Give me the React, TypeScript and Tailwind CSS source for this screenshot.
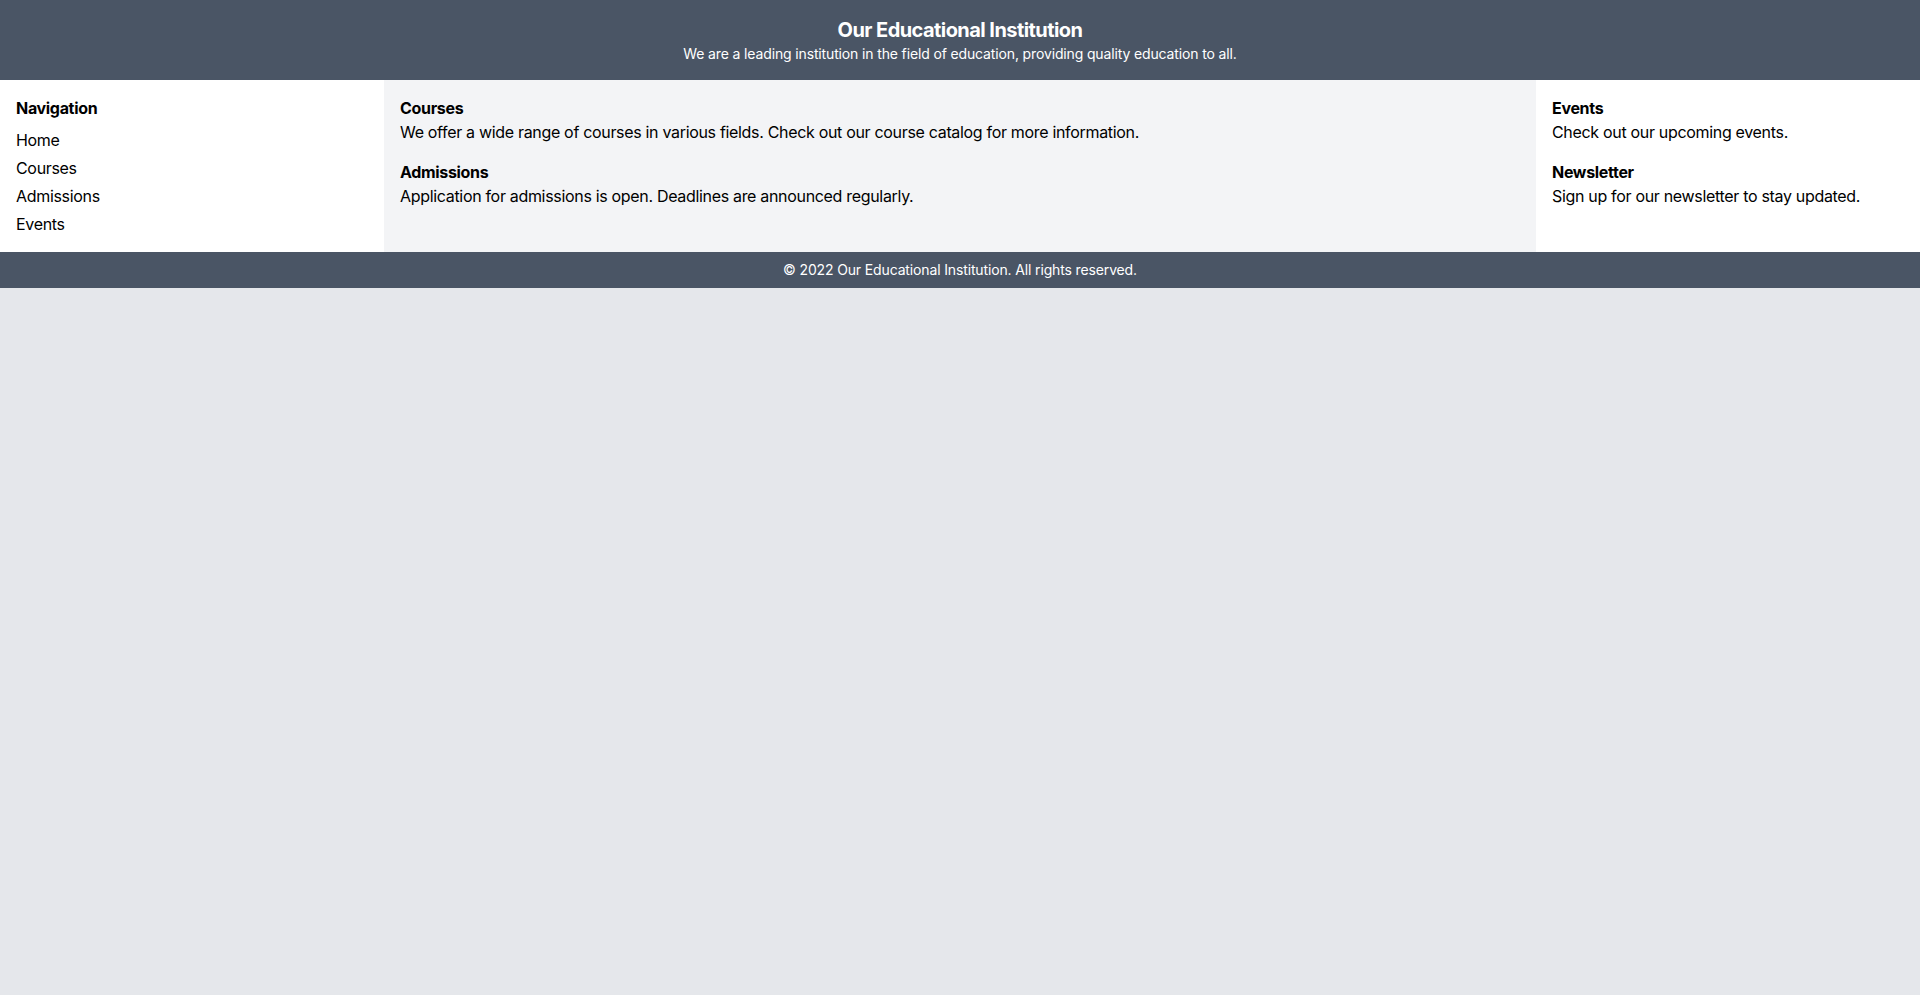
import React from "react";

export default function App() {
  return (
    <div className="min-h-screen bg-gray-200 text-black tracking-[-0.02em]" style={{ fontFamily: "Inter, 'Noto Sans', sans-serif" }}>
      <header className="bg-gray-600 text-white text-center py-4">
        <h1 className="text-xl font-bold tracking-[-0.028em]">Our Educational Institution</h1>
        <p className="text-sm tracking-[-0.01em]">We are a leading institution in the field of education, providing quality education to all.</p>
      </header>
      <main className="grid grid-cols-5">
        <aside className="col-span-1 bg-white p-4">
          <h2 className="font-bold mb-2">Navigation</h2>
          <ul className="space-y-1">
            <li>Home</li>
            <li>Courses</li>
            <li>Admissions</li>
            <li>Events</li>
          </ul>
        </aside>
        <section className="col-span-3 bg-gray-100 p-4">
          <div className="mb-4">
            <h2 className="font-bold">Courses</h2>
            <p>We offer a wide range of courses in various fields. Check out our course catalog for more information.</p>
          </div>
          <div>
            <h2 className="font-bold">Admissions</h2>
            <p>Application for admissions is open. Deadlines are announced regularly.</p>
          </div>
        </section>
        <aside className="col-span-1 bg-white p-4">
          <div className="mb-4">
            <h2 className="font-bold">Events</h2>
            <p>Check out our upcoming events.</p>
          </div>
          <div>
            <h2 className="font-bold">Newsletter</h2>
            <p>Sign up for our newsletter to stay updated.</p>
          </div>
        </aside>
      </main>
      <footer className="bg-gray-600 text-white text-center py-2 text-sm tracking-[-0.01em]">
        © 2022 Our Educational Institution. All rights reserved.
      </footer>
    </div>
  );
}
